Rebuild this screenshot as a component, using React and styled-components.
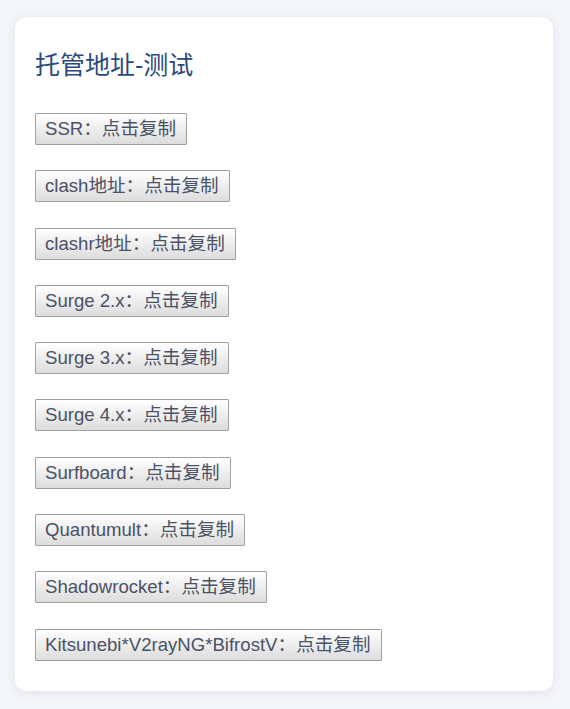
import React from 'react'
import styled, { createGlobalStyle } from 'styled-components'

const GlobalStyle = createGlobalStyle`
  html, body {
    margin: 0;
    padding: 0;
    background: #f5f6fa;
    font-family: "Liberation Sans", "Noto Sans CJK SC", sans-serif;
  }
`

const Page = styled.div`
  padding: 17px 17px 18px 15px;
`

const Card = styled.div`
  width: 538px;
  box-sizing: border-box;
  background: #ffffff;
  border-radius: 12px;
  box-shadow: 0 2px 12px rgba(40, 50, 100, 0.1);
  padding: 30px 20px 30px;
`

const Title = styled.h2`
  margin: 0 0 30px;
  font-size: 25px;
  font-weight: normal;
  line-height: 36px;
  color: #2b4a7c;
`

const List = styled.div`
  display: flex;
  flex-direction: column;
  align-items: flex-start;
  gap: 25.3px;
`

const CopyButton = styled.button`
  font-family: inherit;
  font-size: 18.6px;
  line-height: 20px;
  height: 32px;
  padding: 0 10px 0 9px;
  color: #4a5266;
  background: linear-gradient(#ffffff, #dcdcdc);
  border: 1px solid #a0a0a0;
  border-radius: 1px;
  cursor: pointer;
`

const items = [
  'SSR',
  'clash地址',
  'clashr地址',
  'Surge 2.x',
  'Surge 3.x',
  'Surge 4.x',
  'Surfboard',
  'Quantumult',
  'Shadowrocket',
  'Kitsunebi*V2rayNG*BifrostV',
]

export default function App() {
  return (
    <>
      <GlobalStyle />
      <Page>
        <Card>
          <Title>托管地址-测试</Title>
          <List>
            {items.map(name => (
              <CopyButton key={name}>{name}：点击复制</CopyButton>
            ))}
          </List>
        </Card>
      </Page>
    </>
  )
}
